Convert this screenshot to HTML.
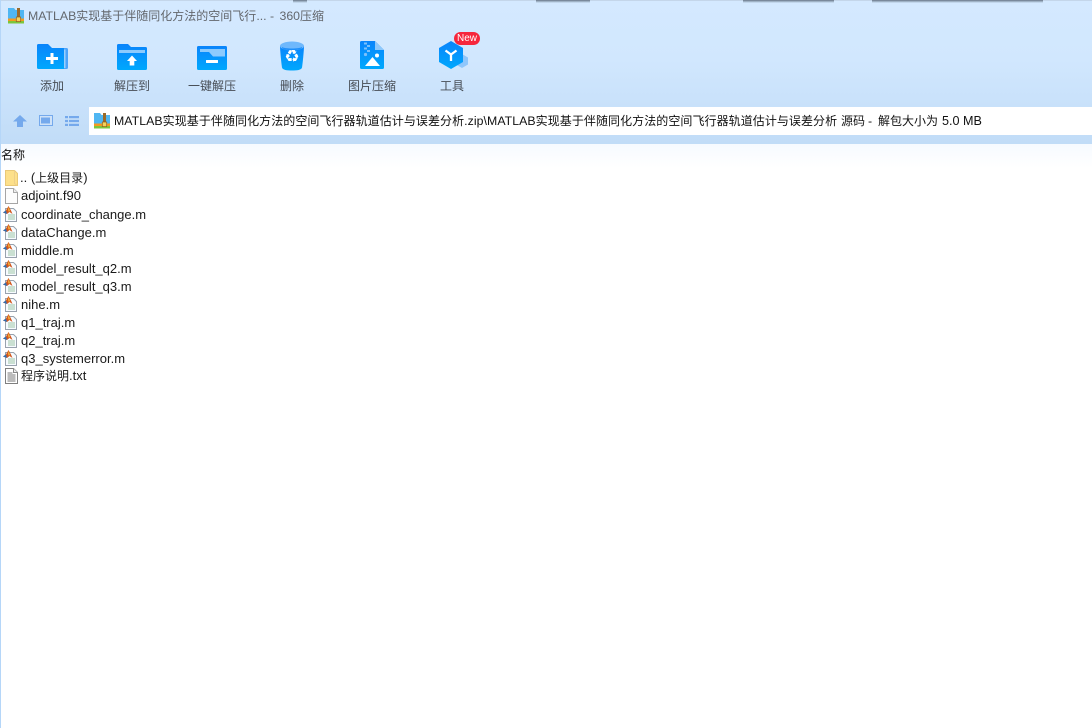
<!DOCTYPE html>
<html lang="zh">
<head>
<meta charset="utf-8">
<title>360压缩</title>
<style>
html,body{margin:0;padding:0;width:1092px;height:728px;overflow:hidden;background:#fff}
body{position:relative;font-family:"Liberation Sans","Noto Sans CJK SC",sans-serif;font-size:13px;color:#1c1c1c}
.a{position:absolute}
.t{position:absolute;white-space:nowrap}
i{font-style:normal;font-size:12px}
#bar{left:0;top:0;width:1092px;height:144px;background:linear-gradient(#d4e9ff 0,#d1e7fe 60px,#c1dcf7 144px)}
#top{left:0;top:0;width:1092px;height:1px;background:#c4d6ea}
#head{left:1px;top:144px;width:1091px;height:24px;background:linear-gradient(#f6faff,#fff)}
#edge{left:0;top:0;width:1px;height:728px;background:#b5d6f8}
.sh{top:0;height:3px;background:linear-gradient(#6b7a8b,rgba(120,140,165,0))}
.lab{position:absolute;top:78px;width:80px;text-align:center;font-size:12px;line-height:16px;color:#474d55}
#addr{left:89px;top:107px;width:1003px;height:28px;background:#fff}
.ad{top:113px;line-height:17px;color:#111;font-size:12.300px}
.f{position:absolute;left:21px;height:18px;line-height:18px;white-space:nowrap;color:#1a1a1a}
svg{position:absolute;overflow:visible}
</style>
</head>
<body>
<div class="a" id="bar"></div>
<div class="a" id="top"></div>
<div class="a sh" style="left:293px;width:14px"></div>
<div class="a sh" style="left:536px;width:54px"></div>
<div class="a sh" style="left:743px;width:91px"></div>
<div class="a sh" style="left:872px;width:171px"></div>
<div class="a" id="head"></div>
<div class="a" id="edge"></div>

<!-- title icon -->
<svg style="left:8px;top:8px" width="16" height="16" viewBox="0 0 16 16"><path d="M0 0h6l1.500 2H16v9H0z" fill="#4fb6f2"/><rect y="10.500" width="16" height="2.500" fill="#f59a1f"/><rect y="13" width="16" height="2.500" fill="#7cc63c"/><rect x="9" y="0" width="3" height="11" fill="#9a6a2a"/><rect x="8.300" y="9" width="4.400" height="4.600" fill="#f5d25a" stroke="#8c5a1e" stroke-width=".7"/></svg>
<div class="t" style="left:28px;top:8px;line-height:17px;color:#63676d;font-size:12.300px">MATLAB<i>实现基于伴随同化方法的空间飞行</i>... - <span style="margin-left:2px">360</span><i>压缩</i></div>

<!-- toolbar icons -->
<svg style="left:37px;top:44px" width="32" height="26" viewBox="0 0 32 26"><defs>
<linearGradient id="g" x1="0" y1="0" x2="0" y2="1"><stop offset="0" stop-color="#0a84fb"/><stop offset="1" stop-color="#00a8fd"/></linearGradient></defs>
<path d="M26 4h3.500a1.500 1.500 0 0 1 1.500 1.500v18a1.500 1.500 0 0 1-1.500 1.500H26z" fill="#4ea4fa"/>
<path d="M27 5.500h1.500V24H27z" fill="#9ad0fd"/>
<path d="M1.500 0H11l4 4h11.500a.5 .5 0 0 1 .5 .5V25H1.500A1.500 1.500 0 0 1 0 23.500V1.500A1.500 1.500 0 0 1 1.500 0z" fill="url(#g)"/>
<path d="M9 13h4.500V9h3v4H21v3h-4.500v4h-3v-4H9z" fill="#fff"/></svg>

<svg style="left:117px;top:44px" width="30" height="26" viewBox="0 0 30 26">
<path d="M1.500 0H11l3 3h14.500A1.500 1.500 0 0 1 30 4.500v20a1.500 1.500 0 0 1-1.500 1.500h-27A1.500 1.500 0 0 1 0 24.500V1.500A1.500 1.500 0 0 1 1.500 0z" fill="url(#g)"/>
<path d="M2 6h26v3H2z" fill="#8ccafd"/>
<path d="M15 11.500l5 5.500h-2.700v4.500h-4.600V17H10z" fill="#fff"/></svg>

<svg style="left:197px;top:46px" width="30" height="24" viewBox="0 0 30 24">
<path d="M1.500 0h27A1.500 1.500 0 0 1 30 1.500v21a1.500 1.500 0 0 1-1.500 1.500h-27A1.500 1.500 0 0 1 0 22.500v-21A1.500 1.500 0 0 1 1.500 0z" fill="url(#g)"/>
<path d="M3 3h25v7.500H16l-4-4.500H3z" fill="#8ccafd"/>
<rect x="9" y="14" width="12" height="3" rx=".5" fill="#fff"/></svg>

<svg style="left:280px;top:41px" width="24" height="30" viewBox="0 0 24 30">
<path d="M0 5C0 9 1.500 24 2 26.500 2.500 29 7 29.500 12 29.500S21.500 29 22 26.500C22.500 24 24 9 24 5z" fill="url(#g)"/>
<ellipse cx="12" cy="5" rx="12" ry="4.500" fill="#6fb8fc"/>
<path d="M2 6c2 2 18 2 20 0v1c-3 3-17 3-20 0z" fill="#1e8ffb"/></svg>
<div class="t" style="left:284px;top:47px;width:16px;text-align:center;line-height:20px;font-size:17px;color:#fff;font-family:'DejaVu Sans',sans-serif">♻</div>

<svg style="left:360px;top:41px" width="24" height="28" viewBox="0 0 24 28">
<path d="M1.500 0H15l9 9v17.500a1.500 1.500 0 0 1-1.500 1.500h-21A1.500 1.500 0 0 1 0 26.500v-25A1.500 1.500 0 0 1 1.500 0z" fill="url(#g)"/>
<path d="M15 0l9 9h-9z" fill="#8ec8fb"/>
<g fill="#7cc0fb"><rect x="4" y="1.500" width="3" height="2"/><rect x="7" y="4" width="3" height="2"/><rect x="4" y="6.500" width="3" height="2"/><rect x="7" y="9" width="3" height="2"/><circle cx="5.500" cy="13.500" r="1.600"/></g>
<circle cx="17" cy="14.500" r="2" fill="#fff"/>
<path d="M5 25l7.500-9 7.500 9z" fill="#fff"/></svg>

<svg style="left:438px;top:41px" width="32" height="30" viewBox="0 0 32 30">
<path d="M24 13l6 3.500v7L24 27l-6-3.500v-7z" fill="#8fc6fb"/>
<path d="M13 0l12 7v14l-12 7-12-7V7z" fill="url(#g)"/>
<path d="M7.500 9.500L13 13.500l5.500-4M13 13.500V20" fill="none" stroke="#fff" stroke-width="2.300"/></svg>
<div class="a" style="left:454px;top:32px;width:26px;height:13px;border-radius:7px;background:#f6263c;color:#fff;font-size:10px;line-height:13px;text-align:center">New</div>

<div class="lab" style="left:12px">添加</div>
<div class="lab" style="left:92px">解压到</div>
<div class="lab" style="left:172px">一键解压</div>
<div class="lab" style="left:252px">删除</div>
<div class="lab" style="left:332px">图片压缩</div>
<div class="lab" style="left:412px">工具</div>

<!-- nav icons -->
<svg style="left:13px;top:115px" width="14" height="12" viewBox="0 0 14 12"><path d="M7 0l7 6.500H10V12H4V6.500H0z" fill="#75a9ec"/></svg>
<svg style="left:39px;top:115px" width="14" height="11" viewBox="0 0 14 11"><rect x=".5" y=".5" width="13" height="10" fill="#cfe2f8" stroke="#75a9ec"/><rect x="2" y="2.500" width="9" height="6" fill="#75a9ec"/></svg>
<svg style="left:65px;top:116px" width="14" height="10" viewBox="0 0 14 10" fill="#75a9ec"><rect width="3" height="2.200"/><rect y="3.900" width="3" height="2.200"/><rect y="7.800" width="3" height="2.200"/><rect x="4" width="10" height="2.200"/><rect x="4" y="3.900" width="10" height="2.200"/><rect x="4" y="7.800" width="10" height="2.200"/></svg>

<!-- address -->
<div class="a" id="addr"></div>
<svg style="left:94px;top:113px" width="16" height="16" viewBox="0 0 16 16"><path d="M0 0h6l1.500 2H16v9H0z" fill="#4fb6f2"/><rect y="10.500" width="16" height="2.500" fill="#f59a1f"/><rect y="13" width="16" height="2.500" fill="#7cc63c"/><rect x="9" y="0" width="3" height="11" fill="#9a6a2a"/><rect x="8.300" y="9" width="4.400" height="4.600" fill="#f5d25a" stroke="#8c5a1e" stroke-width=".7"/></svg>
<div class="t ad" style="left:114px;letter-spacing:.06px">MATLAB<i>实现基于伴随同化方法的空间飞行器轨道估计与误差分析</i>.zip\MATLAB<i>实现基于伴随同化方法的空间飞行器轨道估计与误差分析</i></div>
<div class="t ad" style="left:841px"><i>源码</i></div>
<div class="t ad" style="left:868px">-</div>
<div class="t ad" style="left:878px"><i>解包大小为</i></div>
<div class="t ad" style="left:942px;font-size:12.600px">5.0 MB</div>

<div class="t" style="left:1px;top:147px;line-height:17px;font-size:12px;color:#111">名称</div>

<!-- file icons -->
<svg style="left:5px;top:170px" width="13" height="16" viewBox="0 0 13 16"><path d="M.5.500h9l3 3v12H.500z" fill="#fde08a" stroke="#e9c877"/><path d="M9.500.500v13l3 2" fill="none" stroke="#eed08a"/></svg>
<svg style="left:5px;top:188px" width="13" height="16" viewBox="0 0 13 16"><path d="M.5.500h8l4 4v11H.500z" fill="#fdfdfd" stroke="#a5a5a5"/><path d="M8.500.500v4h4" fill="#eee" stroke="#aaa"/></svg>

<svg width="0" height="0"><defs>
<g id="m"><path d="M2.500 2.500h8l3 3v10h-11z" fill="#f7fbff" stroke="#98a2ae"/>
<path d="M5 9h7M5 11h7M5 13h7" stroke="#9cc6a6" stroke-width="1"/>
<path d="M0 6.500L3 4.500 5.500 0 8 4.500l1.500 3.500L6.500 6 4 8z" fill="#d2581e"/>
<path d="M5.500 1L7 4.500 6 6 5 4z" fill="#f2b23a"/>
<path d="M0 6.500L3 4.500 4 8z" fill="#2d6fb5"/></g></defs></svg>
<svg style="left:3px;top:206px" width="15" height="16" viewBox="0 0 15 16"><use href="#m"/></svg>
<svg style="left:3px;top:224px" width="15" height="16" viewBox="0 0 15 16"><use href="#m"/></svg>
<svg style="left:3px;top:242px" width="15" height="16" viewBox="0 0 15 16"><use href="#m"/></svg>
<svg style="left:3px;top:260px" width="15" height="16" viewBox="0 0 15 16"><use href="#m"/></svg>
<svg style="left:3px;top:278px" width="15" height="16" viewBox="0 0 15 16"><use href="#m"/></svg>
<svg style="left:3px;top:296px" width="15" height="16" viewBox="0 0 15 16"><use href="#m"/></svg>
<svg style="left:3px;top:314px" width="15" height="16" viewBox="0 0 15 16"><use href="#m"/></svg>
<svg style="left:3px;top:332px" width="15" height="16" viewBox="0 0 15 16"><use href="#m"/></svg>
<svg style="left:3px;top:350px" width="15" height="16" viewBox="0 0 15 16"><use href="#m"/></svg>
<svg style="left:5px;top:368px" width="13" height="16" viewBox="0 0 13 16"><path d="M.5.500h8l4 4v11H.500z" fill="#fff" stroke="#7f7f7f"/><path d="M8.500.500v4h4" fill="#eee" stroke="#8a8a8a"/><path d="M2.500 5h5M2.500 7h8M2.500 9h8M2.500 11h8M2.500 13h8" stroke="#777"/></svg>

<div class="f" style="top:169px;left:20px">.. (<i>上级目录</i>)</div>
<div class="f" style="top:187px">adjoint.f90</div>
<div class="f" style="top:205.500px">coordinate_change.m</div>
<div class="f" style="top:223.500px">dataChange.m</div>
<div class="f" style="top:241.500px">middle.m</div>
<div class="f" style="top:259.500px">model_result_q2.m</div>
<div class="f" style="top:277.500px">model_result_q3.m</div>
<div class="f" style="top:295.500px">nihe.m</div>
<div class="f" style="top:313.500px">q1_traj.m</div>
<div class="f" style="top:331.500px">q2_traj.m</div>
<div class="f" style="top:349.500px">q3_systemerror.m</div>
<div class="f" style="top:367px"><i>程序说明</i>.txt</div>
</body>
</html>
